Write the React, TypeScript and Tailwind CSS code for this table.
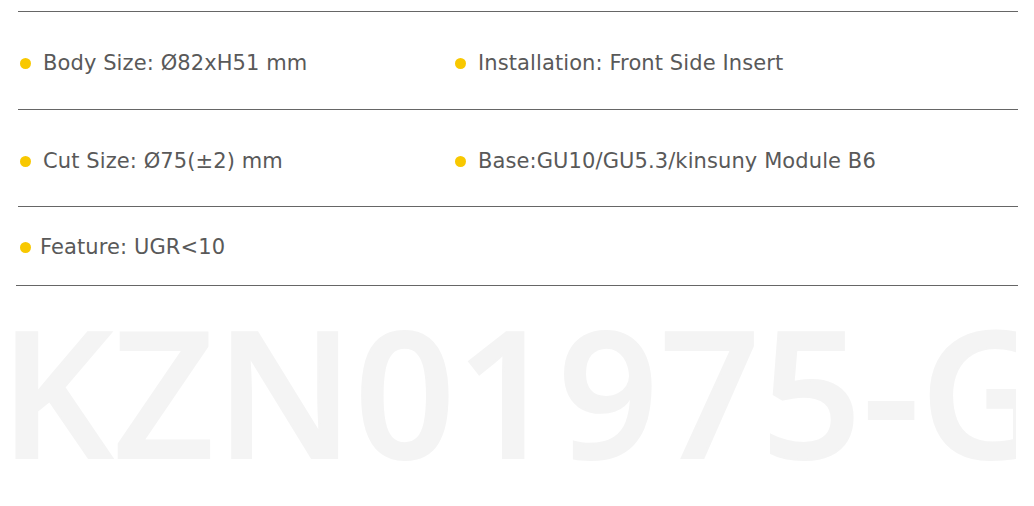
import React from "react";

const font = { fontFamily: '"DejaVu Sans", sans-serif' };

function Item({ text, gap = "gap-[12px]" }: { text: string; gap?: string }) {
  return (
    <div className={`flex items-center ${gap}`}>
      <span className="block h-[11px] w-[11px] shrink-0 rounded-full bg-[#f8c800]" />
      <span className="text-[21px] leading-none tracking-[0.1px] text-[#595959] whitespace-nowrap" style={font}>
        {text}
      </span>
    </div>
  );
}

export default function App() {
  return (
    <div className="w-[1034px] h-[506px] bg-white overflow-hidden">
      <div className="pt-[11px] pl-[18px] w-[1018px]">
        <div className="border-t border-[#666666] h-[98px] flex items-center pl-[2px] pt-[6px]">
          <div className="w-[435px]">
            <Item text="Body Size: Ø82xH51 mm" />
          </div>
          <Item text="Installation: Front Side Insert" />
        </div>
        <div className="border-t border-[#666666] h-[97px] flex items-center pl-[2px] pt-[6px]">
          <div className="w-[435px]">
            <Item text="Cut Size: Ø75(±2) mm" />
          </div>
          <Item text="Base:GU10/GU5.3/kinsuny Module B6" />
        </div>
        <div className="border-t border-[#666666] h-[79px] flex items-center pl-[2px] pt-[3px]">
          <Item text="Feature: UGR<10" gap="gap-[9px]" />
        </div>
        <div className="-ml-[2px] border-t border-[#666666]" />
      </div>
      <div className="w-[1016px] overflow-hidden pt-[16px]">
        <div
          className="text-[176px] font-semibold leading-none tracking-[1px] text-[#f4f4f4] whitespace-nowrap"
          style={{ fontFamily: '"Open Sans", sans-serif', WebkitTextStroke: "2px #f4f4f4" }}
        >
          KZN01975-G
        </div>
      </div>
    </div>
  );
}
